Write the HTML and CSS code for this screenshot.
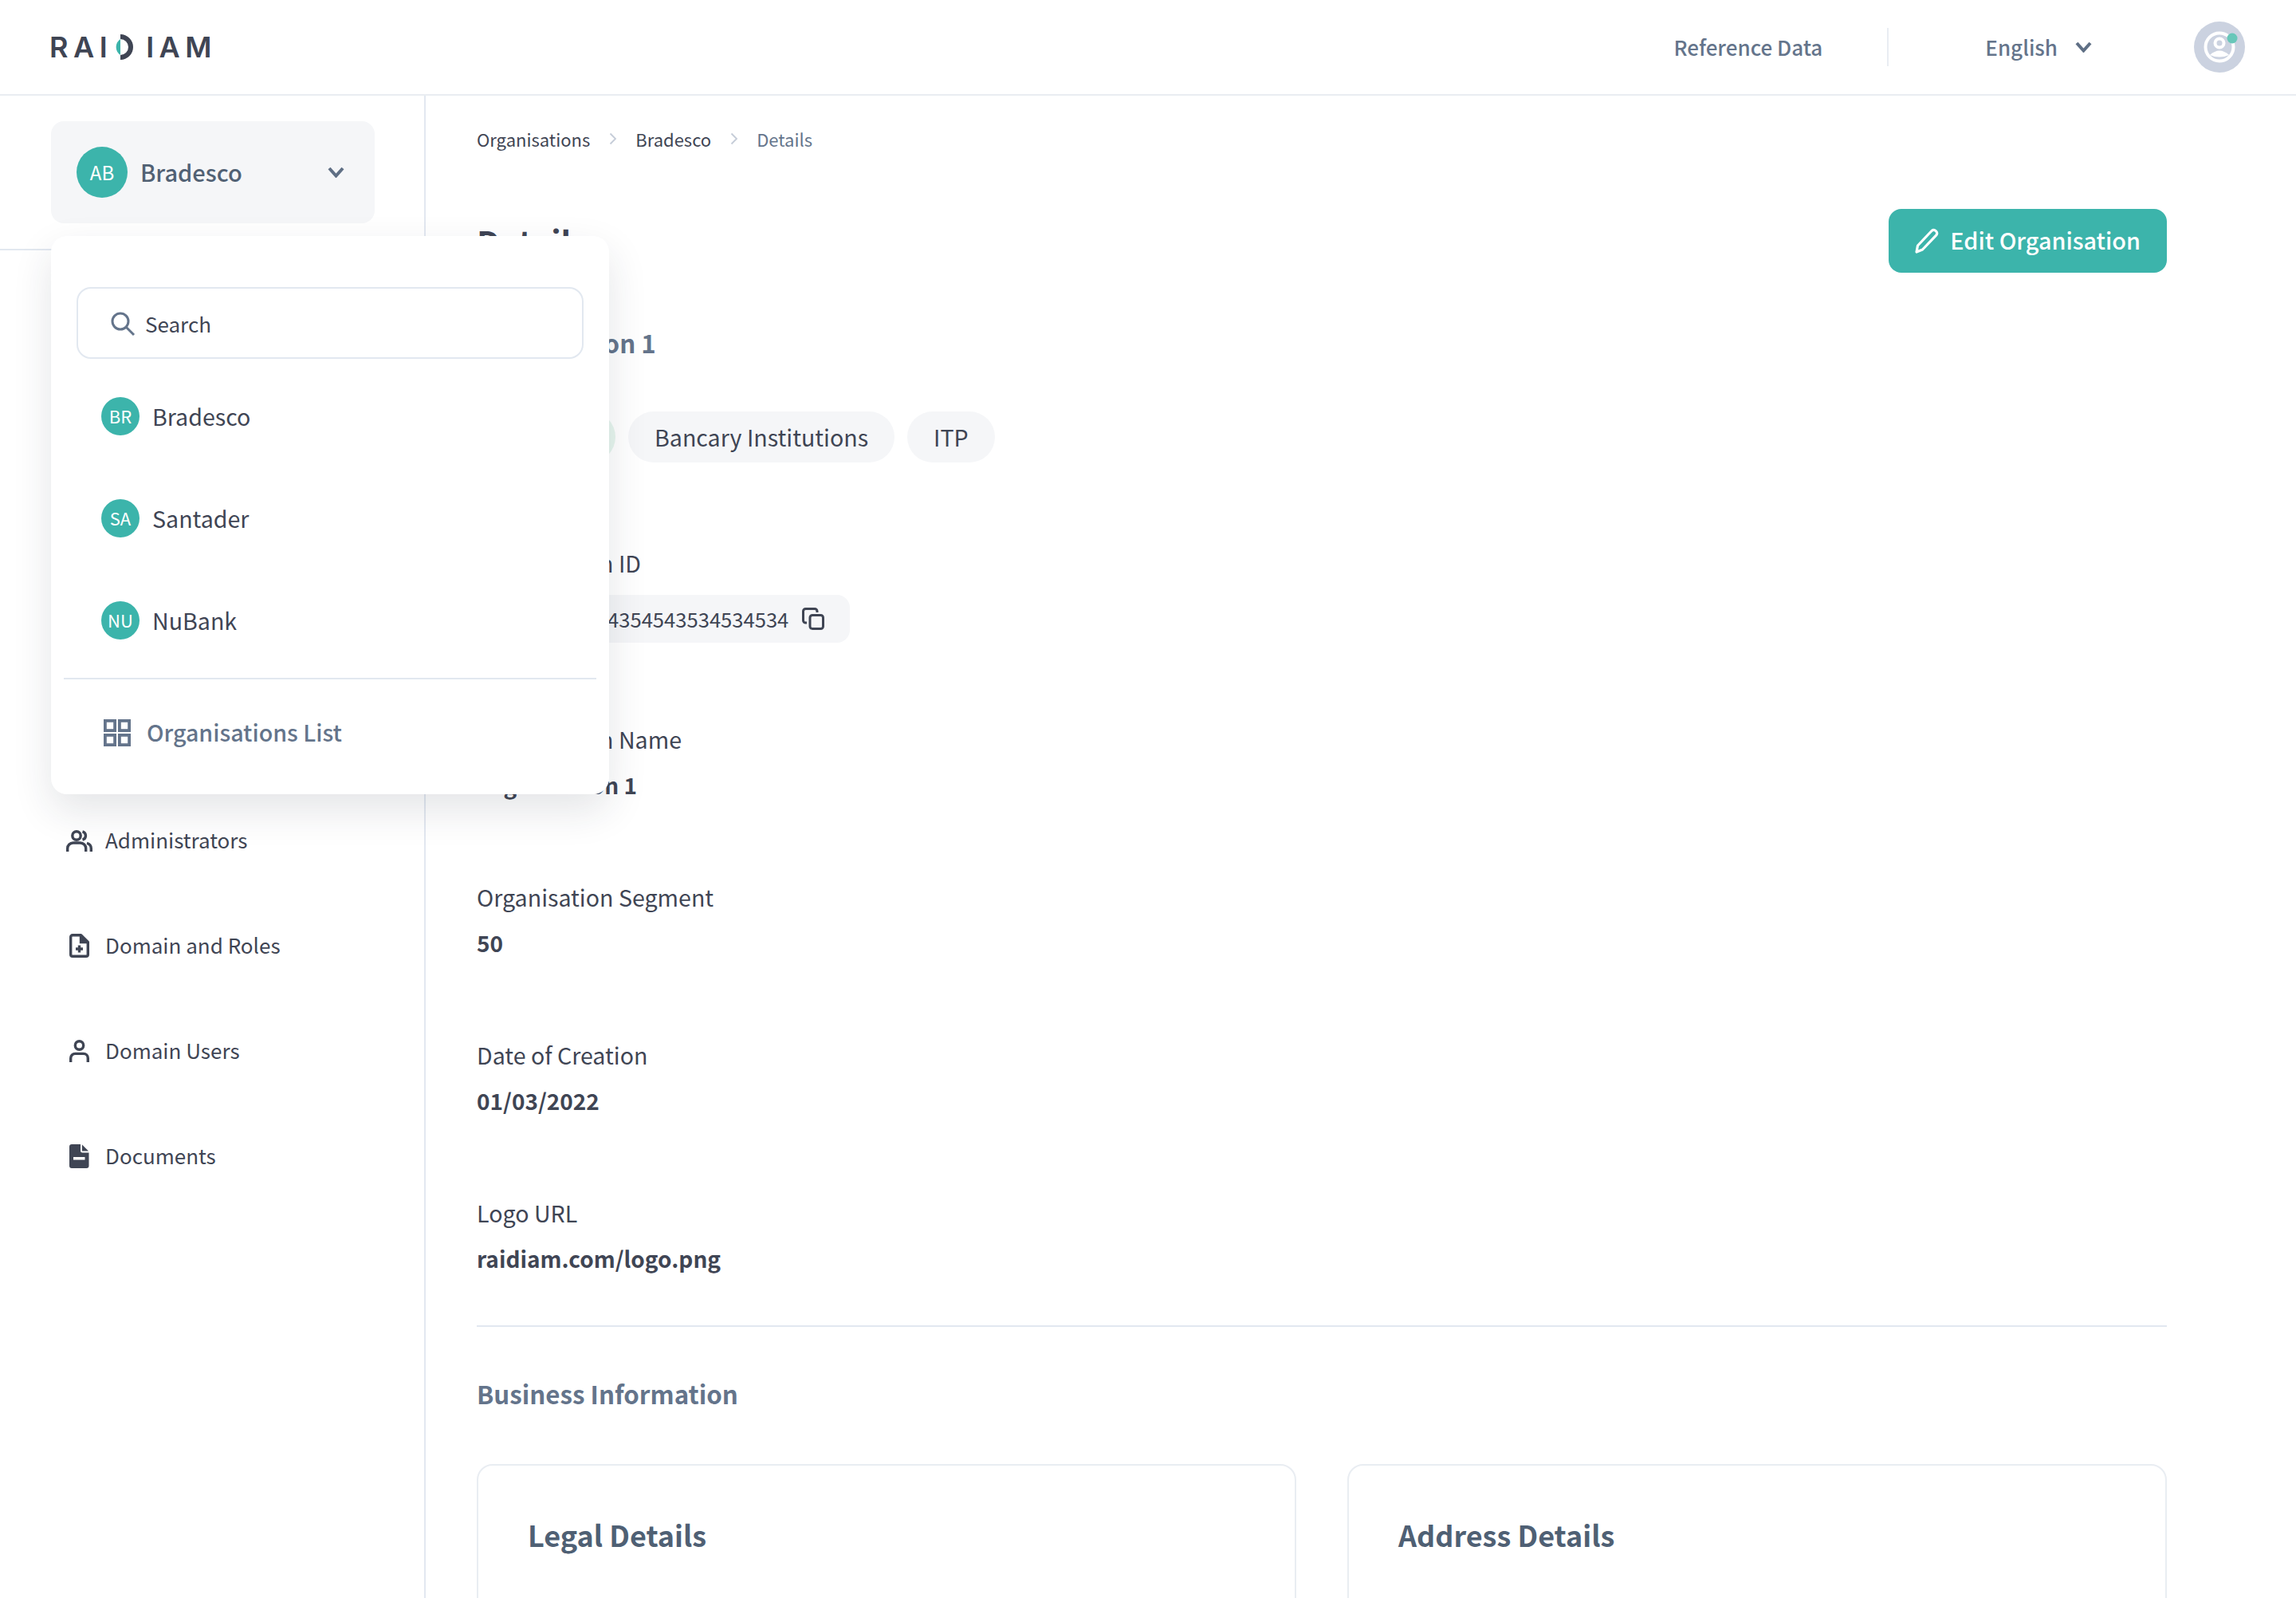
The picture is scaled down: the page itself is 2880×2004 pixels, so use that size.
FILE: index.html
```html
<!DOCTYPE html>
<html lang="en">
<head>
<meta charset="utf-8">
<title>Raidiam – Organisation Details</title>
<link rel="stylesheet" href="styles.css">
</head>
<body>
<header class="topbar">
  <div class="logo">
    <span class="logo-text">RAI</span>
    <svg class="logo-mark" width="28" height="32" viewBox="0 0 28 32"><path d="M6 6 A12 12 0 0 0 6 26 Z" fill="#3cb4ab"/><path d="M6 0 A16 16 0 0 1 6 32 V26 A10 10 0 0 0 6 6 Z" fill="#3f4554"/></svg>
    <span class="logo-text">IAM</span>
  </div>
  <nav class="top-actions">
    <a class="top-link">Reference Data</a>
    <span class="top-sep"></span>
    <a class="lang">English
      <svg width="21" height="14" viewBox="0 0 21 14"><path d="M2 2 10.500 11.500 19 2" fill="none" stroke="#5f6f85" stroke-width="4"/></svg>
    </a>
    <span class="user">
      <svg width="64" height="64" viewBox="0 0 64 64"><circle cx="32" cy="32" r="32" fill="#cbd2e0"/><circle cx="32" cy="32" r="17.500" fill="none" stroke="#fff" stroke-width="4"/><circle cx="32" cy="27" r="5.500" fill="none" stroke="#fff" stroke-width="4"/><path d="M20 42 Q32 31 44 42 Q32 47 20 42Z" fill="#fff"/><circle cx="48" cy="21" r="6.500" fill="#68c7b9"/></svg>
    </span>
  </nav>
</header>
<div class="layout">
  <aside class="sidebar">
    <div class="org-section">
      <div class="org-card">
        <span class="avatar avatar-lg">AB</span>
        <span class="org-name">Bradesco</span>
        <svg class="org-chev" width="21" height="14" viewBox="0 0 21 14"><path d="M2 2 10.500 11.500 19 2" fill="none" stroke="#5f6f85" stroke-width="4"/></svg>
      </div>
    </div>
    <nav class="side-nav">
      <a class="side-item">
        <span class="side-icon"><svg width="33" height="27" viewBox="0 0 33 27" fill="none" stroke="#3f4554" stroke-width="3.400"><circle cx="13" cy="7" r="5.200"/><path d="M1.700 27V23a7 7 0 0 1 7-7h9a7 7 0 0 1 7 7v4"/><path d="M20.500 1.800a5.400 5.400 0 0 1 0 10.400"/><path d="M26 16.300a7 7 0 0 1 5.300 6.700v4"/></svg></span>
        Administrators
      </a>
      <a class="side-item">
        <span class="side-icon"><svg width="25" height="30" viewBox="0 0 25 30" fill="none" stroke="#3f4554" stroke-width="3.400"><path d="M4 1.700h10.500L23.300 10.500V26a2.300 2.300 0 0 1-2.300 2.300H4A2.300 2.300 0 0 1 1.700 26V4A2.300 2.300 0 0 1 4 1.700Z" stroke-linejoin="round"/><path d="M14.500 1.700V10.500H23.300" fill="#3f4554"/><path d="M12.500 14.500v9M8 19h9"/></svg></span>
        Domain and Roles
      </a>
      <a class="side-item">
        <span class="side-icon"><svg width="25" height="28" viewBox="0 0 25 28" fill="none" stroke="#3f4554" stroke-width="3.400"><circle cx="12.500" cy="7" r="5.200"/><path d="M1.700 28V23a5.600 5.600 0 0 1 5.600-5.600h10.400a5.600 5.600 0 0 1 5.600 5.600v5"/></svg></span>
        Domain Users
      </a>
      <a class="side-item">
        <span class="side-icon"><svg width="25" height="30" viewBox="0 0 25 30"><path d="M3 0H14V8a2.500 2.500 0 0 0 2.500 2.500H24.500V27a3 3 0 0 1-3 3H3a3 3 0 0 1-3-3V3a3 3 0 0 1 3-3Z" fill="#3f4554"/><path d="M16 0.500 24 8.500H16Z" fill="#3f4554"/><rect x="5" y="16" width="14.500" height="3.500" fill="#fff"/></svg></span>
        Documents
      </a>
    </nav>
  </aside>

  <main class="content">
    <ol class="crumbs">
      <li>Organisations</li>
      <li class="crumb-sep"><svg width="10" height="16" viewBox="0 0 10 16"><path d="M1.500 1.500 8 8 1.500 14.500" fill="none" stroke="#c5ccd8" stroke-width="1.800"/></svg></li>
      <li>Bradesco</li>
      <li class="crumb-sep"><svg width="10" height="16" viewBox="0 0 10 16"><path d="M1.500 1.500 8 8 1.500 14.500" fill="none" stroke="#c5ccd8" stroke-width="1.800"/></svg></li>
      <li class="crumb-current">Details</li>
    </ol>

    <div class="title-row">
      <h1 class="page-title">Details</h1>
      <button class="btn-primary">
        <svg width="30" height="32" viewBox="0 0 30 32" fill="none" stroke="#fff" stroke-width="3.200" stroke-linejoin="round"><path d="M21 3.500a4 4 0 0 1 5.800 5.400L9.500 27l-7.500 3L3.500 22Z"/></svg>
        <span class="btn-label">Edit Organisation</span>
      </button>
    </div>

    <h2 class="org-title">Organisation 1</h2>

    <div class="chips">
      <span class="chip chip-green">Verified</span>
      <span class="chip">Bancary Institutions</span>
      <span class="chip">ITP</span>
    </div>

    <section class="field field-id">
      <div class="field-label">Organisation ID</div>
      <div class="id-chip">
        <span class="id-text">34543543544354543534534534</span>
        <svg width="28" height="28" viewBox="0 0 28 28" fill="none" stroke="#3f4554" stroke-width="3"><rect x="10" y="9.500" width="16.500" height="17" rx="3"/><path d="M6 19H4.500a3 3 0 0 1-3-3V4.500a3 3 0 0 1 3-3H16a3 3 0 0 1 3 3V6"/></svg>
      </div>
    </section>
    <section class="field">
      <div class="field-label">Organisation Name</div>
      <div class="field-value">Organisation 1</div>
    </section>
    <section class="field">
      <div class="field-label">Organisation Segment</div>
      <div class="field-value">50</div>
    </section>
    <section class="field">
      <div class="field-label">Date of Creation</div>
      <div class="field-value">01/03/2022</div>
    </section>
    <section class="field field-last">
      <div class="field-label">Logo URL</div>
      <div class="field-value">raidiam.com/logo.png</div>
    </section>

    <hr class="rule">

    <h2 class="section-title">Business Information</h2>

    <div class="cards">
      <article class="card"><h3 class="card-title">Legal Details</h3></article>
      <article class="card"><h3 class="card-title">Address Details</h3></article>
    </div>
  </main>

  <div class="org-menu">
    <label class="search">
      <svg class="search-icon" width="32" height="32" viewBox="0 0 32 32" fill="none" stroke="#64748b" stroke-width="3"><circle cx="13" cy="13" r="10"/><path d="M20 20 30 30"/></svg>
      <span class="search-text">Search</span>
    </label>
    <ul class="org-list">
      <li class="org-row"><span class="avatar avatar-sm">BR</span>Bradesco</li>
      <li class="org-row"><span class="avatar avatar-sm">SA</span>Santader</li>
      <li class="org-row"><span class="avatar avatar-sm">NU</span>NuBank</li>
    </ul>
    <div class="menu-rule"></div>
    <a class="menu-link">
      <svg width="34" height="34" viewBox="0 0 34 34" fill="none" stroke="#64748b" stroke-width="3.800"><rect x="1.900" y="1.900" width="12.200" height="12.200"/><rect x="19.900" y="1.900" width="12.200" height="12.200"/><rect x="1.900" y="19.900" width="12.200" height="12.200"/><rect x="19.900" y="19.900" width="12.200" height="12.200"/></svg>
      <span class="menu-link-text">Organisations List</span>
    </a>
  </div>
</div>
</body>
</html>
```

FILE: styles.css
```css
* { box-sizing: border-box; }
html, body { margin: 0; height: 100%; }
body {
  height: 2004px;
  overflow: hidden;
  background: #fff;
  color: #3f4554;
  font-family: "Noto Sans CJK SC", "Noto Sans", sans-serif;
}
h1, h2, h3, ol, ul { margin: 0; padding: 0; list-style: none; }

.topbar {
  height: 120px;
  display: flex;
  align-items: center;
  justify-content: space-between;
  padding: 0 64px 0 62px;
  border-bottom: 2px solid #e9edf2;
}
.logo { display: flex; align-items: center; }
.logo-text {
  font-family: Inter, sans-serif;
  font-weight: 600;
  font-size: 36px;
  line-height: 32px;
  letter-spacing: 6.500px;
  color: #3f4554;
}
.logo-mark { margin: 0 10px 0 4px; }

.top-actions { display: flex; align-items: center; }
.top-link, .lang {
  font-size: 26px;
  font-weight: 500;
  line-height: 42px;
  color: #64748b;
}
.top-sep { width: 2px; height: 48px; background: #e9edf2; margin: 0 121px 0 81px; }
.lang { display: flex; align-items: center; gap: 22px; }
.user { display: flex; margin-left: 128px; }

.layout { position: relative; display: flex; height: 1884px; }
.sidebar { width: 534px; flex: none; border-right: 2px solid #e2e8f0; }
.org-section { padding: 32px 62px 32px 64px; border-bottom: 2px solid #e2e8f0; }
.org-card {
  height: 128px;
  display: flex;
  align-items: center;
  padding: 0 32px;
  border-radius: 16px;
  background: #f5f6f8;
}
.avatar {
  flex: none;
  display: flex;
  align-items: center;
  justify-content: center;
  border-radius: 50%;
  background: #3cb4ab;
  color: #fff;
}
.avatar-lg { width: 64px; height: 64px; padding-bottom: 2px; font-size: 24px; }
.avatar-sm { width: 48px; height: 48px; padding-bottom: 2px; font-size: 22px; }
.org-name { margin: -3px 0 0 16px; font-size: 29px; font-weight: 500; line-height: 44px; color: #516174; }
.org-chev { margin-left: auto; margin-right: 6px; }

.side-nav { padding-top: 674px; }
.side-item {
  height: 132px;
  display: flex;
  align-items: center;
  gap: 16px;
  padding: 0 0 2px 83px;
  font-size: 26px;
  line-height: 40px;
  color: #3f4554;
}
.side-icon { width: 33px; margin-top: 2px; display: flex; justify-content: center; }

.content { flex: 1; min-width: 0; padding: 34px 162px 0 64px; }
.crumbs { display: flex; align-items: center; height: 40px; font-size: 22px; line-height: 40px; color: #3f4554; }
.crumb-sep { display: flex; margin: 0 23.500px; }
.crumb-current { color: #64748b; }

.title-row { display: flex; justify-content: space-between; align-items: center; height: 80px; margin-top: 68px; }
.page-title { font-size: 41px; font-weight: 700; line-height: 56px; color: #3f4554; }
.btn-primary {
  display: flex;
  align-items: center;
  gap: 14px;
  height: 80px;
  padding: 0 33px;
  border: 0;
  border-radius: 16px;
  background: #3cb4ab;
  color: #fff;
  font-family: inherit;
  font-size: 28.800px;
  font-weight: 500;
}
.btn-label { margin-bottom: 3px; }

.org-title { margin-top: 64px; font-size: 31.300px; font-weight: 600; line-height: 48px; color: #64748b; }
.chips { display: flex; gap: 16px; margin-top: 62px; }
.chip {
  height: 64px;
  display: flex;
  align-items: center;
  justify-content: center;
  padding: 0 33px 2px;
  border-radius: 32px;
  background: #f5f6f8;
  font-size: 28.600px;
  color: #3f4554;
}
.chip-green { width: 174px; padding: 0; background: #e6f5ee; }

.field { margin-top: 0; margin-bottom: 101px; }
.field-id { margin-top: 106px; margin-bottom: 101px; }
.field-last { margin-bottom: 64px; }
.field-label { font-size: 28.600px; line-height: 40px; color: #3f4554; }
.field-value { margin-top: 17px; font-size: 28px; font-weight: 600; line-height: 40px; color: #3f4554; }
.id-chip {
  display: inline-flex;
  align-items: center;
  gap: 17px;
  height: 60px;
  margin-top: 20px;
  padding: 0 32px 0 22px;
  border-radius: 16px;
  background: #f5f6f8;
  font-size: 25.600px;
}
.id-text { margin-bottom: 2px; }

.rule { height: 2px; margin: 0; border: 0; background: #e2e8f0; }
.section-title { margin-top: 60px; font-size: 31.300px; font-weight: 600; line-height: 48px; color: #64748b; }
.cards { display: grid; grid-template-columns: 1fr 1fr; gap: 64px; margin-top: 64px; }
.card { height: 400px; padding: 58px 62px; border: 2px solid #e9edf2; border-radius: 20px; }
.card-title { font-size: 36px; font-weight: 700; line-height: 56px; color: #4f6074; }

.org-menu {
  position: absolute;
  left: 64px;
  top: 176px;
  width: 700px;
  height: 700px;
  padding: 64px 32px 0;
  border-radius: 20px;
  background: #fff;
  box-shadow: 0 20px 50px rgba(30, 40, 60, 0.12);
}
.search {
  height: 90px;
  display: flex;
  align-items: center;
  gap: 12px;
  padding: 0 40px;
  border: 2px solid #e2e8f0;
  border-radius: 18px;
}
.search-icon { margin-top: 2px; }
.search-text { margin-top: 2px; font-size: 26px; line-height: 40px; color: #3f4554; }
.org-list { margin-top: 8px; }
.org-row {
  height: 128px;
  display: flex;
  align-items: center;
  gap: 16px;
  padding-left: 31px;
  font-size: 28.600px;
  line-height: 44px;
  color: #3f4554;
}
.menu-rule { height: 2px; margin: 8px -16px 0; background: #e2e8f0; }
.menu-link {
  height: 134px;
  display: flex;
  align-items: center;
  gap: 20px;
  padding-left: 34px;
  font-size: 28.600px;
  font-weight: 500;
  line-height: 44px;
  color: #64748b;
}
.menu-link-text { margin-bottom: 3px; }
```
